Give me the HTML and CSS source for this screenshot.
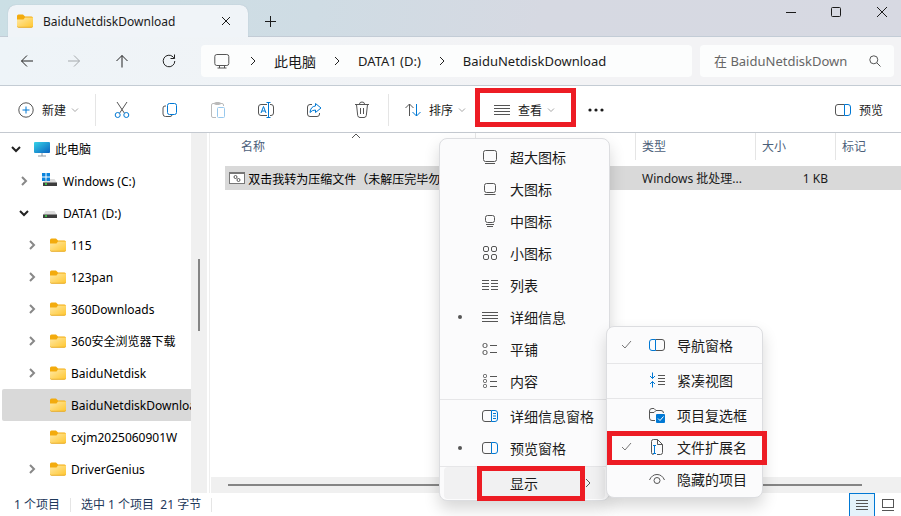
FILE: index.html
```
<!DOCTYPE html>
<html lang="zh-CN">
<head>
    <meta charset="UTF-8">
    <meta name="viewport" content="width=device-width, initial-scale=1.0">
    <title>BaiduNetdiskDownload</title>
    <link rel="stylesheet" href="styles.css">
</head>
<body>
    <svg class="defs" aria-hidden="true">
        <linearGradient id="folderFill" x1="0" y1="0" x2="1" y2="1">
            <stop offset="0" stop-color="#ffe9a6"/>
            <stop offset="1" stop-color="#ffc62e"/>
        </linearGradient>
        <linearGradient id="screenFill" x1="0" y1="0" x2="1" y2="1">
            <stop offset="0" stop-color="#35d3e8"/>
            <stop offset="1" stop-color="#0b62c0"/>
        </linearGradient>
        <symbol id="folder" viewBox="0 0 16 14">
            <path d="M0 2Q0 .5 1.5 .5H6L8 2.5H14.5Q16 2.5 16 4V8H0Z" fill="#f3ab0d"/>
            <path d="M0 5.5H6.5L8 3.5H16V12Q16 13.5 14.5 13.5H1.5Q0 13.5 0 12Z" fill="url(#folderFill)"/>
            <path d="M.3 12.5Q.6 13.3 1.5 13.3H14.5Q15.4 13.3 15.7 12.5" fill="none" stroke="#e3a21a" stroke-width=".8"/>
        </symbol>
        <symbol id="chev-right" viewBox="0 0 8 10"><path d="M2 1L6 5L2 9"/></symbol>
        <symbol id="chev-down" viewBox="0 0 10 8"><path d="M1 2L5 6L9 2"/></symbol>
        <symbol id="drive" viewBox="0 0 16 16">
            <path d="M3.5 6H12.5L15 10H1Z" fill="#dcdcdc"/>
            <path d="M1 9.500H15V13H1Z" fill="#3c3c3c"/>
            <path d="M3 11H5" stroke="#3be04a" stroke-width="1.500"/>
        </symbol>
        <symbol id="lines" viewBox="0 0 16 16"><path d="M0 3.500H16M0 6.500H16M0 9.500H16M0 12.500H16"/></symbol>
        <symbol id="pane" viewBox="0 0 16 16">
            <path d="M9.500 2.500H3Q.5 2.500 .5 5V11Q.5 13.500 3 13.500H9.500"/>
            <path class="blue" d="M9.500 2.500H13Q15.500 2.500 15.500 5V11Q15.500 13.500 13 13.500H9.500Z"/>
        </symbol>
    </svg>

    <div class="window">
        <header class="titlebar">
            <div class="tab">
                <svg class="folder"><use href="#folder"/></svg>
                <span class="tab-title">BaiduNetdiskDownload</span>
                <button class="tab-close" aria-label="关闭标签页">
                    <svg width="10" height="10"><path d="M1 1L9 9M9 1L1 9"/></svg>
                </button>
            </div>
            <button class="tab-add" aria-label="新标签页">
                <svg width="12" height="12"><path d="M1 6.500H12M6.500 1V12"/></svg>
            </button>
            <div class="controls">
                <button aria-label="最小化"><svg width="12" height="12"><path d="M1 6.500H11"/></svg></button>
                <button aria-label="最大化"><svg width="12" height="12"><rect x="1.500" y="1.500" width="9" height="9" rx="1"/></svg></button>
                <button aria-label="关闭"><svg width="12" height="12"><path d="M1 1L11 11M11 1L1 11"/></svg></button>
            </div>
        </header>

        <nav class="navbar">
            <div class="nav-buttons">
                <button aria-label="后退"><svg width="14" height="14"><path d="M13 7H1.500M7 1.500L1.500 7L7 12.500"/></svg></button>
                <button aria-label="前进" disabled><svg width="14" height="14"><path d="M1 7H12.500M7 1.500L12.500 7L7 12.500"/></svg></button>
                <button aria-label="上移"><svg width="14" height="14"><path d="M7 13.500V1.500M1.500 7L7 1.500L12.500 7"/></svg></button>
                <button aria-label="刷新"><svg width="14" height="14"><path d="M12.800 7A5.800 5.800 0 1 1 11 2.800L12.500 4.300M12.500 .5V4.500H8.500"/></svg></button>
            </div>
            <div class="address">
                <svg class="pc" width="16" height="16"><rect x=".8" y="1.500" width="14" height="11" rx="2"/><path d="M5.500 13V15M10.500 13V15M3.500 15H12.500"/></svg>
                <svg class="chev"><use href="#chev-right"/></svg>
                <a href="#" class="root">此电脑</a>
                <svg class="chev"><use href="#chev-right"/></svg>
                <a href="#">DATA1 (D:)</a>
                <svg class="chev"><use href="#chev-right"/></svg>
                <a href="#">BaiduNetdiskDownload</a>
            </div>
            <div class="search">
                <input type="text" placeholder="在 BaiduNetdiskDown" aria-label="搜索">
                <svg width="12" height="12"><circle cx="4.800" cy="4.800" r="4"/><path d="M7.800 7.800L11.500 11.500"/></svg>
            </div>
        </nav>

        <div class="toolbar">
            <button class="tool new">
                <svg width="16" height="16"><circle cx="8" cy="8" r="7.200"/><path class="blue" d="M8 4.500V11.500M4.500 8H11.500"/></svg>
                <span>新建</span>
                <svg class="drop"><use href="#chev-down"/></svg>
            </button>
            <div class="tool-icons">
                <button aria-label="剪切"><svg width="16" height="18"><path d="M3 1L10.300 12M13 1L5.700 12"/><circle class="blue" cx="3.700" cy="14" r="2.500"/><circle class="blue" cx="12.300" cy="14" r="2.500"/></svg></button>
                <button aria-label="复制"><svg width="16" height="16"><path d="M4 4H3Q1 4 1 6V12Q1 14.500 3.500 14.500H8Q10 14.500 10 12.800"/><rect class="blue" x="5.500" y="1.500" width="9" height="11" rx="2"/></svg></button>
                <button aria-label="粘贴" disabled><svg width="16" height="18"><path d="M6 16.500H3Q1.500 16.500 1.500 15V4Q1.500 2.500 3 2.500H12Q13.500 2.500 13.500 4V5"/><rect x="4.500" y="1.500" width="6" height="2" rx="1"/><rect class="blue" x="7.500" y="6.500" width="7" height="10" rx="1"/></svg></button>
                <button aria-label="重命名"><svg width="18" height="16"><path d="M10 2.500H4Q1.500 2.500 1.500 5V11Q1.500 13.500 4 13.500H10M13 2.500H14Q16.500 2.500 16.500 5V11Q16.500 13.500 14 13.500H13"/><path class="blue" d="M4 11L6.500 4.500L9 11M5 9H8M11.500 .5V15.500M9.500 .5H13.500M9.500 15.500H13.500"/></svg></button>
                <button aria-label="共享"><svg width="16" height="16"><path d="M6 2.500H4Q1.500 2.500 1.500 5V12Q1.500 14.500 4 14.500H11Q13.500 14.500 13.500 12V11"/><path class="blue" d="M9.500 1.500L15 6L9.500 10.500V8Q6 8 4 10.500Q4.500 4.500 9.500 4Z"/></svg></button>
                <button aria-label="删除"><svg width="16" height="18"><path d="M1 3.500H15M5.500 3Q5.500 1 8 1Q10.500 1 10.500 3M2.500 3.500L3.700 14.500Q4 16.500 6 16.500H10Q12 16.500 12.300 14.500L13.500 3.500M6.500 7V13M9.500 7V13"/></svg></button>
            </div>
            <button class="tool sort">
                <svg width="16" height="16"><path d="M4.500 14V2M.5 6L4.500 2L8.500 6"/><path class="blue" d="M11.500 2V14M7.500 10L11.500 14L15.500 10"/></svg>
                <span>排序</span>
                <svg class="drop"><use href="#chev-down"/></svg>
            </button>
            <div class="view">
                <button class="tool marked">
                    <svg width="16" height="16"><use href="#lines"/></svg>
                    <span>查看</span>
                    <svg class="drop"><use href="#chev-down"/></svg>
                </button>
                <ul class="menu view-menu">
                    <li><button><svg width="16" height="16"><rect x="1.500" y="1.500" width="13" height="11" rx="2"/><path d="M3 14.500H13"/></svg>超大图标</button></li>
                    <li><button><svg width="16" height="16"><rect x="2.500" y="2.500" width="11" height="9" rx="2"/><path d="M2.500 13.500H13.500"/></svg>大图标</button></li>
                    <li><button><svg width="16" height="16"><rect x="3.500" y="2.500" width="9" height="7" rx="2"/><path d="M4 11.500H12M5 13.500H11"/></svg>中图标</button></li>
                    <li><button><svg width="16" height="16"><rect x="1.500" y="1.500" width="5" height="5" rx="1.500"/><rect x="9.500" y="1.500" width="5" height="5" rx="1.500"/><rect x="1.500" y="9.500" width="5" height="5" rx="1.500"/><rect x="9.500" y="9.500" width="5" height="5" rx="1.500"/></svg>小图标</button></li>
                    <li><button><svg width="16" height="16"><path d="M0 3.500H7M0 6.500H7M0 9.500H7M0 12.500H7M9 3.500H16M9 6.500H16M9 9.500H16M9 12.500H16"/></svg>列表</button></li>
                    <li class="dot"><button><svg width="16" height="16"><use href="#lines"/></svg>详细信息</button></li>
                    <li><button><svg width="16" height="16"><rect x="1" y="2.500" width="4" height="4" rx="1.500"/><rect x="1" y="9.500" width="4" height="4" rx="1.500"/><path d="M8 4.500H15M8 11.500H15"/></svg>平铺</button></li>
                    <li><button><svg width="16" height="16"><rect x="1.500" y="1.500" width="3" height="3" rx="1"/><rect x="1.500" y="6.500" width="3" height="3" rx="1"/><rect x="1.500" y="11.500" width="3" height="3" rx="1"/><path d="M8 3.500H15M8 8.500H15M8 13.500H15"/></svg>内容</button></li>
                    <li class="sep"></li>
                    <li><button><svg width="16" height="16"><use href="#pane"/><path class="blue" d="M11 5.500H14M11 8H14M11 10.500H14"/></svg>详细信息窗格</button></li>
                    <li class="dot"><button><svg width="16" height="16"><use href="#pane"/></svg>预览窗格</button></li>
                    <li class="sep"></li>
                    <li class="open">
                        <button class="marked"><span class="blank"></span>显示<svg class="more"><use href="#chev-right"/></svg></button>
                        <ul class="menu show-menu">
                            <li><button><svg class="check"><path d="M1 5L4 8L10 1"/></svg><svg width="16" height="16"><path d="M6.500 2.500H13Q15.500 2.500 15.500 5V11Q15.500 13.500 13 13.500H6.500"/><path class="blue" d="M6.500 2.500H3Q.5 2.500 .5 5V11Q.5 13.500 3 13.500H6.500Z"/></svg>导航窗格</button></li>
                            <li class="sep"></li>
                            <li><button><svg width="16" height="16"><path d="M9 3.500H16M9 6.500H16M9 9.500H16M9 12.500H16"/><path class="blue" d="M3.500 .5V6.500M1 4L3.500 6.500L6 4M3.500 15.500V9.500M1 12L3.500 9.500L6 12"/></svg>紧凑视图</button></li>
                            <li class="sep"></li>
                            <li><button><svg width="16" height="16"><path d="M6 13.500H3Q.5 13.500 .5 11V4Q.5 1.500 3 1.500H5L7 3.500H12Q14.500 3.500 14.500 6M.5 5.500H5L7 3.500"/><rect x="7" y="7" width="9" height="9" rx="1" fill="#0078d4" stroke="none"/><path d="M9 11.500L11 13.500L14.500 9.500" stroke="#fff"/></svg>项目复选框</button></li>
                            <li class="marked"><button><svg class="check"><path d="M1 5L4 8L10 1"/></svg><svg width="16" height="16"><path d="M8 15.500H11.500Q13.500 15.500 13.500 13.500V5.500L8.500 .5H4.500Q2.500 .5 2.500 2.500V13.500Q2.500 15.500 4.500 15.500M8.500 .5V5.500H13.500"/><path class="blue" d="M5.500 7V14M4 6.500H7M4 14.500H7"/></svg>文件扩展名</button></li>
                            <li><button><svg width="16" height="16"><path d="M.5 9Q3 3.500 8 3.500Q13 3.500 15.500 9"/><circle cx="8" cy="9.500" r="3"/></svg>隐藏的项目</button></li>
                        </ul>
                    </li>
                </ul>
            </div>
            <button class="overflow" aria-label="更多"><svg width="16" height="4"><circle cx="2" cy="2" r="1.600"/><circle cx="8" cy="2" r="1.600"/><circle cx="14" cy="2" r="1.600"/></svg></button>
            <button class="tool preview">
                <svg width="16" height="16"><use href="#pane"/></svg>
                <span>预览</span>
            </button>
        </div>

        <main class="content">
            <aside class="sidebar">
                <ul class="tree">
                    <li class="open-node">
                        <svg class="arrow"><use href="#chev-down"/></svg>
                        <svg width="16" height="16"><rect x="0" y="1" width="16" height="11" rx="1" fill="url(#screenFill)"/><path d="M8 12V15M4 15H12" stroke="#8d9aa5"/></svg>
                        <a href="#">此电脑</a>
                    </li>
                    <li class="level1">
                        <svg class="arrow"><use href="#chev-right"/></svg>
                        <svg width="16" height="16"><use href="#drive"/><path d="M0 0H3.500V3.500H0ZM4.500 0H8V3.500H4.500ZM0 4.500H3.500V8H0ZM4.500 4.500H8V8H4.500Z" fill="#0a84dd"/></svg>
                        <a href="#">Windows (C:)</a>
                    </li>
                    <li class="level1 open-node">
                        <svg class="arrow"><use href="#chev-down"/></svg>
                        <svg width="16" height="16"><use href="#drive"/></svg>
                        <a href="#">DATA1 (D:)</a>
                    </li>
                    <li class="level2"><svg class="arrow"><use href="#chev-right"/></svg><svg class="folder"><use href="#folder"/></svg><a href="#">115</a></li>
                    <li class="level2"><svg class="arrow"><use href="#chev-right"/></svg><svg class="folder"><use href="#folder"/></svg><a href="#">123pan</a></li>
                    <li class="level2"><svg class="arrow"><use href="#chev-right"/></svg><svg class="folder"><use href="#folder"/></svg><a href="#">360Downloads</a></li>
                    <li class="level2"><svg class="arrow"><use href="#chev-right"/></svg><svg class="folder"><use href="#folder"/></svg><a href="#">360安全浏览器下载</a></li>
                    <li class="level2"><svg class="arrow"><use href="#chev-right"/></svg><svg class="folder"><use href="#folder"/></svg><a href="#">BaiduNetdisk</a></li>
                    <li class="level2 current"><span class="arrow"></span><svg class="folder"><use href="#folder"/></svg><a href="#">BaiduNetdiskDownload</a></li>
                    <li class="level2"><span class="arrow"></span><svg class="folder"><use href="#folder"/></svg><a href="#">cxjm2025060901W</a></li>
                    <li class="level2"><svg class="arrow"><use href="#chev-right"/></svg><svg class="folder"><use href="#folder"/></svg><a href="#">DriverGenius</a></li>
                </ul>
                <div class="vscroll"><div class="thumb"></div></div>
            </aside>

            <section class="files">
                <svg class="sorted" width="10" height="6"><path d="M1 5L5 1L9 5"/></svg>
                <table>
                    <colgroup><col class="c-name"><col class="c-date"><col class="c-type"><col class="c-size"><col></colgroup>
                    <thead>
                        <tr><th>名称</th><th></th><th>类型</th><th>大小</th><th>标记</th></tr>
                    </thead>
                    <tbody>
                        <tr>
                            <td class="name">
                                <svg width="16" height="12"><rect x=".5" y=".5" width="15" height="11" fill="#fff" stroke="#777"/><path d="M0 1H16" stroke="#777" stroke-width="2"/><circle cx="6.500" cy="5" r="1.500"/><circle cx="9.500" cy="8" r="1.500"/></svg>
                                <span>双击我转为压缩文件（未解压完毕勿</span>
                            </td>
                            <td></td>
                            <td>Windows 批处理...</td>
                            <td class="size">1 KB</td>
                            <td></td>
                        </tr>
                    </tbody>
                </table>
                <div class="hscroll"><div class="thumb"></div></div>
            </section>
        </main>

        <footer class="status">
            <span class="cell">1 个项目</span>
            <span class="cell">选中 1 个项目&nbsp; 21 字节</span>
            <div class="modes">
                <button class="active" aria-label="详细信息"><svg width="12" height="12"><path d="M0 1.500H12M0 4.500H12M0 7.500H12M0 10.500H12"/></svg></button>
                <button aria-label="大缩略图"><svg width="12" height="12"><rect x=".5" y=".5" width="11" height="8"/><path d="M0 11.500H12"/></svg></button>
            </div>
        </footer>
    </div>
</body>
</html>
```
FILE: styles.css
```
* {
    box-sizing: border-box;
}
body {
    margin: 0;
    font-family: "Noto Sans", "Noto Sans CJK SC", sans-serif;
    font-size: 12px;
    color: #1b1b1b;
    overflow: hidden;
}
button {
    display: flex;
    align-items: center;
    justify-content: center;
    padding: 0;
    border: none;
    background: none;
    font: inherit;
    color: inherit;
}
a {
    color: inherit;
    text-decoration: none;
    white-space: nowrap;
}
ul {
    list-style: none;
    margin: 0;
    padding: 0;
}
svg {
    flex: none;
    fill: none;
    stroke: #555;
    stroke-width: 1;
}
.blue {
    stroke: #0078d4;
}
.defs {
    position: absolute;
    width: 0;
    height: 0;
}
.folder {
    width: 16px;
    height: 14px;
    stroke: none;
}
.window {
    display: flex;
    flex-direction: column;
    height: 100vh;
    background: #fff;
}

/* title bar */
.titlebar {
    display: flex;
    height: 37px;
    padding-left: 8px;
    background: linear-gradient(100deg, #cbdfe5, #cfdce4 35%, #d6d9e2 60%, #d7d9e2);
    border-bottom: 1px solid #c3ccd6;
}
.tab {
    display: flex;
    align-items: center;
    width: 240px;
    height: 32px;
    margin-top: 5px;
    padding: 0 12px 0 9px;
    background: #f0f4f8;
    border-radius: 8px 8px 0 0;
    box-shadow: 0 0 1px #9fb0bd;
    clip-path: inset(-2px -2px 0 -2px);
}
.tab-title {
    flex: 1;
    margin-left: 10px;
}
.tab-close {
    width: 20px;
    height: 20px;
}
.tab-close svg,
.tab-add svg,
.controls svg {
    stroke: #1b1b1b;
}
.tab-add {
    width: 44px;
    height: 32px;
    margin-top: 5px;
}
.controls {
    display: flex;
    margin-left: auto;
}
.controls button {
    width: 45px;
    height: 24px;
}
.controls button:last-child {
    width: 43px;
    padding-left: 4px;
}

/* navigation */
.navbar {
    display: flex;
    align-items: center;
    gap: 8px;
    height: 49px;
    padding-right: 7px;
    background: linear-gradient(90deg, #eef4f8, #f3f3f5 60%);
    border-bottom: 1px solid #c4ccd4;
}
.nav-buttons {
    display: flex;
    width: 193px;
    padding-left: 3px;
}
.nav-buttons button {
    width: 48px;
    height: 32px;
}
.nav-buttons svg {
    stroke: #222;
}
.nav-buttons button:disabled svg {
    stroke: #a5a9ac;
}
.address {
    display: flex;
    flex: 1;
    align-items: center;
    height: 32px;
    padding-left: 13px;
    font-size: 13px;
    background: #fcfdfd;
    border-radius: 4px;
}
.address .root {
    font-size: 14px;
}
.pc {
    margin-right: 2px;
}
.chev {
    width: 8px;
    height: 10px;
    margin: 0 17px;
    stroke: #222;
}
.search {
    display: flex;
    align-items: center;
    width: 194px;
    height: 32px;
    padding: 0 13px 0 14px;
    background: #fcfdfd;
    border-radius: 4px;
}
.search input {
    flex: 1;
    min-width: 0;
    margin-right: 12px;
    padding: 0;
    border: none;
    outline: none;
    background: none;
    font: inherit;
    font-size: 13px;
}
.search input::placeholder {
    color: #666;
}

/* toolbar */
.toolbar {
    display: flex;
    align-items: center;
    height: 47px;
    padding: 2px 18px 0;
    border-bottom: 1px solid #c4c9d0;
}
.tool {
    gap: 8px;
    height: 32px;
    justify-content: flex-start;
}
.drop {
    width: 8px;
    height: 6px;
    margin-left: -3px;
    stroke: #888;
}
.new {
    width: 78px;
    border-right: 1px solid #e5e5e5;
}
.tool-icons {
    display: flex;
    width: 293px;
    padding-left: 2px;
    border-right: 1px solid #e5e5e5;
}
.tool-icons button {
    width: 48px;
    height: 32px;
}
.tool-icons button:disabled {
    opacity: 0.4;
}
.sort {
    width: 86px;
    padding-left: 16px;
}
.view {
    position: relative;
}
.view .tool {
    width: 101px;
    padding-left: 19px;
}
.marked {
    position: relative;
}
.marked::after {
    content: "";
    position: absolute;
    inset: -6px 0 -1px;
    border: 5px solid #ed1c24;
}
.overflow {
    width: 40px;
    height: 32px;
}
.overflow svg {
    fill: #1b1b1b;
    stroke: none;
}
.preview {
    margin-left: auto;
}

/* drop-down menus */
.menu {
    position: absolute;
    z-index: 2;
    background: #fbfbfc;
    border: 1px solid #dcdde0;
    border-radius: 8px;
    box-shadow: 0 8px 16px rgba(0, 0, 0, 0.16);
    font-size: 14px;
}
.view-menu {
    top: 44px;
    left: -36px;
    width: 171px;
    padding: 2px 0 1px;
}
.menu button {
    justify-content: flex-start;
    width: 100%;
    height: 32px;
    padding-left: 42px;
    white-space: nowrap;
}
.menu button > svg,
.blank {
    width: 16px;
    margin-right: 12px;
}
.menu .sep {
    height: 3px;
    border-bottom: 1px solid #e6e6e8;
    border-top: 1px solid transparent;
}
.dot {
    position: relative;
}
.dot::before {
    content: "";
    position: absolute;
    top: 14px;
    left: 18px;
    width: 4px;
    height: 4px;
    border-radius: 50%;
    background: #555;
}
.open {
    position: relative;
    padding: 0 4px;
}
.menu .open > button {
    padding-left: 38px;
    background: #f1f1f2;
    border-radius: 4px;
}
.open > .marked::after {
    inset: -1px 20px -2px 33px;
}
.menu .more {
    width: 8px;
    height: 10px;
    margin: 0 0 0 46px;
}
.menu .show-menu {
    top: -141px;
    left: 166px;
    width: 157px;
    padding: 2px 0;
}
.menu .check {
    width: 12px;
    height: 10px;
    margin-right: 16px;
    stroke: #777;
}
.show-menu button:has(.check) {
    padding-left: 14px;
}
.show-menu .marked::after {
    inset: 0 -5px -2px 0;
}

/* folder tree */
.content {
    display: flex;
    flex: 1;
    min-height: 0;
}
.sidebar {
    display: flex;
    width: 210px;
    border-right: 1px solid #eee;
}
.tree {
    flex: 1;
    min-width: 0;
    overflow: hidden;
}
.tree li {
    display: flex;
    align-items: center;
    height: 32px;
    margin-left: 2px;
    padding-left: 9px;
    color: #000;
}
.tree svg {
    stroke: none;
}
.tree .arrow {
    width: 10px;
    height: 10px;
    margin-right: 13px;
    stroke: #888;
    stroke-width: 2;
    flex: none;
}
.tree .open-node .arrow {
    stroke: #222;
}
.tree a {
    margin-left: 5px;
}
.tree .level1 {
    padding-left: 17px;
}
.tree .level2 {
    padding-left: 25px;
}
.tree .current {
    background: #d9d9d9;
    border-radius: 2px 0 0 2px;
}
.vscroll {
    width: 16px;
    margin-right: 2px;
    padding: 126px 0 0 7px;
    background: #f0f0f0;
}
.vscroll .thumb {
    width: 2px;
    height: 72px;
    background: #858585;
}

/* file list */
.files {
    position: relative;
    display: flex;
    flex: 1;
    flex-direction: column;
    min-width: 0;
}
.sorted {
    position: absolute;
    top: 0;
    left: 141px;
}
table {
    width: calc(100% - 15px);
    margin-left: 15px;
    border-collapse: collapse;
    table-layout: fixed;
}
.c-name {
    width: 251px;
}
.c-date {
    width: 160px;
}
.c-type {
    width: 120px;
}
.c-size {
    width: 80px;
}
th {
    height: 33px;
    padding: 0 6px;
    font-weight: normal;
    line-height: 27px;
    text-align: left;
    vertical-align: top;
    color: #4c607a;
    background: linear-gradient(#e5e5e5, #e5e5e5) right top / 1px 27px no-repeat;
}
th:first-child {
    padding-left: 16px;
}
th:last-child {
    background: none;
}
td {
    height: 24px;
    padding: 0 6px;
    background: #d9d9d9;
    white-space: nowrap;
}
.name {
    padding: 0 4px;
    color: #000;
    overflow: hidden;
}
.name svg {
    vertical-align: middle;
}
.name span {
    vertical-align: middle;
}
.size {
    padding-right: 8px;
    text-align: right;
}
.hscroll {
    height: 16px;
    margin: auto 0 0 1px;
    padding: 7px 39px 0 17px;
    background: #f0f0f0;
}
.hscroll .thumb {
    height: 2px;
    background: #858585;
}

/* status bar */
.status {
    display: flex;
    align-items: center;
    height: 23px;
    padding: 0 1px 0 4px;
    color: #1e395b;
}
.cell {
    padding: 0 10px;
    line-height: 14px;
    border-right: 1px solid #e5e5e5;
}
.modes {
    display: flex;
    align-self: stretch;
    margin-left: auto;
}
.modes button {
    width: 25px;
}
.modes .active {
    width: 26px;
    background: #e5f3fb;
    border: 1px solid #0078d4;
    border-bottom: none;
}
```
